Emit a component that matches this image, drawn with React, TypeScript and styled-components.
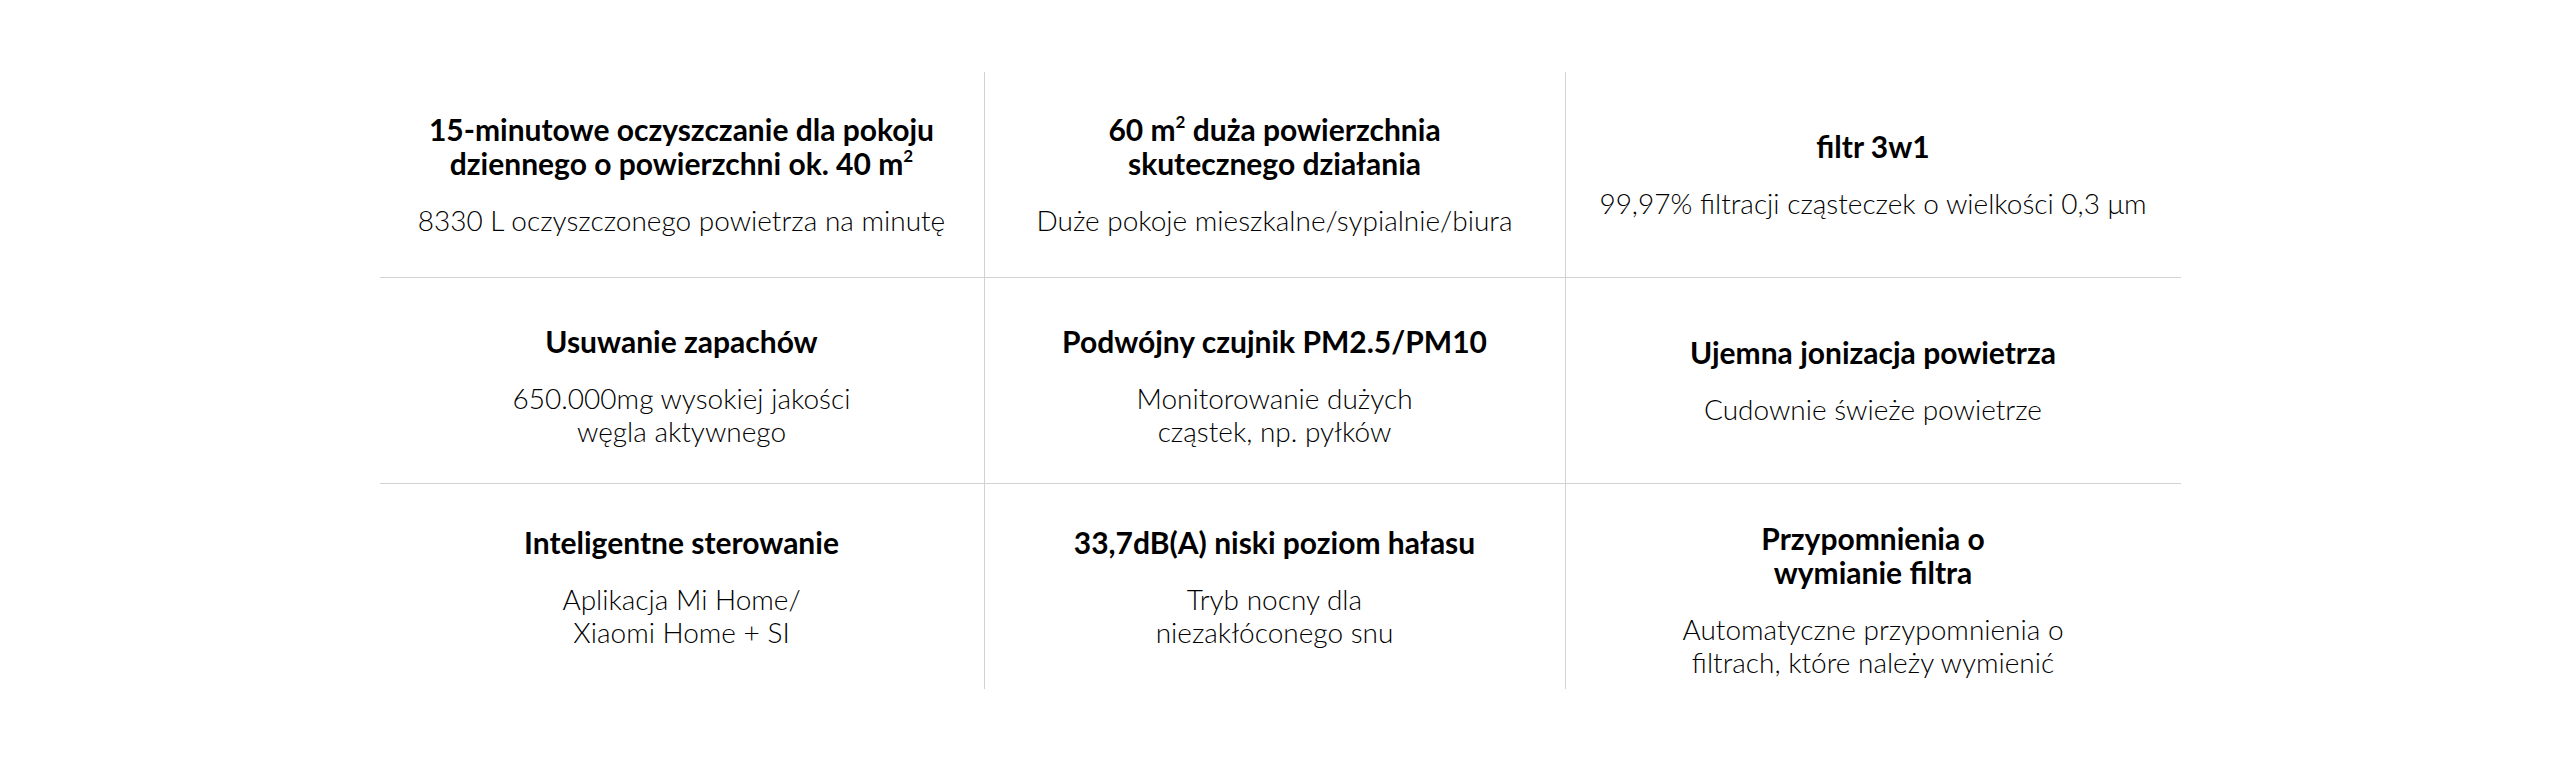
import React from "react";
import styled, { createGlobalStyle } from "styled-components";

const GlobalStyle = createGlobalStyle`
  html, body {
    margin: 0;
    padding: 0;
    background: #ffffff;
  }
  body {
    font-family: Lato, "Noto Sans", "Liberation Sans", sans-serif;
    color: #000;
  }
`;

const Page = styled.main`
  display: flex;
  justify-content: center;
  padding-top: 72px;
`;

const Grid = styled.section`
  display: grid;
  grid-template-columns: 605px 581px 615px;
  grid-auto-rows: auto;
`;

const Cell = styled.div<{ $lastCol: boolean; $lastRow: boolean; $nudge?: number }>`
  box-sizing: border-box;
  height: ${(p) => (p.$lastRow ? 205 : 206)}px;
  display: flex;
  flex-direction: column;
  align-items: center;
  justify-content: center;
  text-align: center;
  padding: ${(p) => (p.$nudge ? `${p.$nudge}px` : "0")} 16px 0;
  border-right: ${(p) => (p.$lastCol ? "none" : "1px solid #d2d2d2")};
  border-bottom: ${(p) => (p.$lastRow ? "none" : "1px solid #d2d2d2")};
`;

const Title = styled.h3`
  margin: 0;
  font-size: 30px;
  line-height: 34px;
  font-weight: 700;
  color: #000;
  sup {
    font-size: 17px;
    line-height: 0;
    vertical-align: 13px;
  }
`;

const Desc = styled.p`
  margin: 24px 0 0;
  font-size: 28px;
  line-height: 33px;
  font-weight: 300;
  color: #000;
`;

type Item = { title: React.ReactNode; desc: React.ReactNode; nudge?: number };

const items: Item[] = [
  {
    title: (
      <>
        15-minutowe oczyszczanie dla pokoju
        <br />
        dziennego o powierzchni ok. 40 m<sup>2</sup>
      </>
    ),
    desc: "8330 L oczyszczonego powietrza na minutę",
  },
  {
    title: (
      <>
        60 m<sup>2</sup> duża powierzchnia
        <br />
        skutecznego działania
      </>
    ),
    desc: "Duże pokoje mieszkalne/sypialnie/biura",
  },
  {
    title: "filtr 3w1",
    desc: "99,97% filtracji cząsteczek o wielkości 0,3 μm",
  },
  {
    title: "Usuwanie zapachów",
    desc: (
      <>
        650.000mg wysokiej jakości
        <br />
        węgla aktywnego
      </>
    ),
    nudge: 10,
  },
  {
    title: "Podwójny czujnik PM2.5/PM10",
    desc: (
      <>
        Monitorowanie dużych
        <br />
        cząstek, np. pyłków
      </>
    ),
    nudge: 10,
  },
  {
    title: "Ujemna jonizacja powietrza",
    desc: "Cudownie świeże powietrze",
  },
  {
    title: "Inteligentne sterowanie",
    desc: (
      <>
        Aplikacja Mi Home/
        <br />
        Xiaomi Home + SI
      </>
    ),
  },
  {
    title: "33,7dB(A) niski poziom hałasu",
    desc: (
      <>
        Tryb nocny dla
        <br />
        niezakłóconego snu
      </>
    ),
  },
  {
    title: (
      <>
        Przypomnienia o
        <br />
        wymianie filtra
      </>
    ),
    desc: (
      <>
        Automatyczne przypomnienia o
        <br />
        filtrach, które należy wymienić
      </>
    ),
    nudge: 26,
  },
];

export default function App() {
  return (
    <>
      <GlobalStyle />
      <Page>
        <Grid>
          {items.map((it, i) => (
            <Cell key={i} $lastCol={i % 3 === 2} $lastRow={i >= 6} $nudge={it.nudge}>
              <Title>{it.title}</Title>
              <Desc>{it.desc}</Desc>
            </Cell>
          ))}
        </Grid>
      </Page>
    </>
  );
}
